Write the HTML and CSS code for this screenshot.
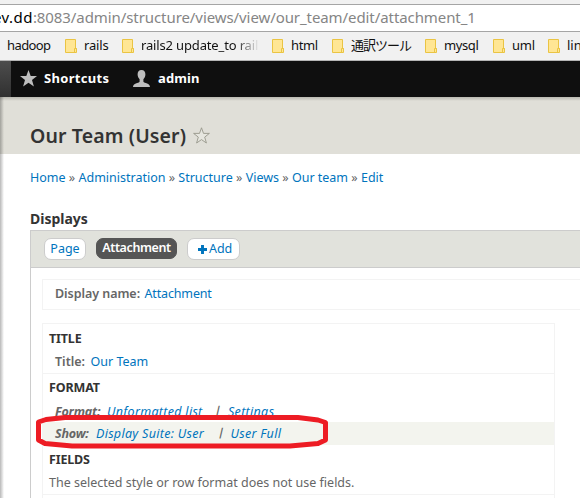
FILE: index.html
```html
<!DOCTYPE html>
<html lang="en">
<head>
<meta charset="utf-8">
<title>Our Team (User)</title>
<link rel="stylesheet" href="styles.css">
</head>
<body>
<svg class="defs" width="0" height="0"><symbol id="folder" viewBox="0 0 13 14"><path d="M.5.5h10v9h1v4H.5z" fill="#ffe694" stroke="#eac443"/><path d="M9.5 13V9.5h2V13" fill="#ffe694" stroke="#eac443"/></symbol></svg>
<div class="address"><span class="url"><b>ev.dd</b>:8083/admin/structure/views/view/our_team/edit/attachment_1</span></div>
<nav class="bookmarks">
<span class="bm hadoop">hadoop</span>
<span class="bm rails"><svg><use href="#folder"/></svg>rails</span>
<span class="bm rails2"><svg><use href="#folder"/></svg><span class="fade">rails2 update_to rail</span></span>
<span class="bm html"><svg><use href="#folder"/></svg>html</span>
<span class="bm jp"><svg><use href="#folder"/></svg>通訳ツール</span>
<span class="bm mysql"><svg><use href="#folder"/></svg>mysql</span>
<span class="bm uml"><svg><use href="#folder"/></svg>uml</span>
<span class="bm lin"><svg><use href="#folder"/></svg>lin</span>
</nav>
<div class="toolbar">
<svg class="star" viewBox="0 0 17 17"><path d="M8.5 0l2.200 6H17l-5 4.100 1.900 6.500-5.400-3.800-5.400 3.800L5 10.100 0 6h6.300z" fill="#bebebe"/></svg><span class="shortcuts">Shortcuts</span>
<svg class="person" viewBox="0 0 17 17"><path d="M8.5 0C5.9 0 4.5 1.8 4.6 4.500c.1 2 .9 3.700 2 4.800v2.500C5.600 13.400 0 13.300 0 17h17c0-3.700-5.600-3.600-6.600-5.200V9.300c1.100-1.100 1.900-2.800 2-4.800C12.500 1.800 11.100 0 8.500 0z" fill="#bebebe"/></svg><span class="admin">admin</span>
</div>
<main class="page">
<header><h1>Our Team (User)</h1><svg viewBox="0 0 17 17"><path d="M8.500 .8l2 5.600h5.900l-4.700 3.700 1.700 5.900-4.900-3.400-4.900 3.400 1.700-5.900L.6 6.400h5.900z" fill="#e6e6df" stroke="#96968a" stroke-width=".9"/></svg></header>
<div class="crumbs"><a>Home</a> » <a>Administration</a> » <a>Structure</a> » <a>Views</a> » <a>Our team</a> » <a>Edit</a></div>
<h2>Displays</h2>
<section class="displays">
<div class="tabs"><a class="tab t-page">Page</a><a class="tab active">Attachment</a><a class="tab t-add"><svg viewBox="0 0 8 8"><path d="M2.700 0h2.600v2.700H8v2.600H5.300V8H2.700V5.300H0V2.700h2.700z" fill="#0074bd"/></svg><span>Add</span></a></div>
<div class="name"><b>Display name:</b><a>Attachment</a></div>
<div class="column">
<section class="bucket b-title"><h3>TITLE</h3><div class="row"><b>Title:</b><a>Our Team</a></div></section>
<section class="bucket b-format"><h3>FORMAT</h3><div class="row it r-format"><b>Format:</b><a class="v">Unformatted list</a><i>|</i><a>Settings</a></div><div class="row it r-show"><b>Show:</b><a class="v">Display Suite: User</a><i>|</i><a class="full">User Full</a></div></section>
<section class="bucket b-fields"><h3>FIELDS</h3><p>The selected style or row format does not use fields.</p></section>
</div>
</section>
</main>
<svg class="mark" viewBox="0 0 580 498"><path d="M65 417.500L298 417.500L318 420L325.500 422.500V440L318 443.500L290 446H72L45 443.500L38.500 440V422L46 419.500Z" fill="none" stroke="#ed1c24" stroke-width="5" stroke-linejoin="round"/></svg>
</body>
</html>
```
FILE: styles.css
```css
* { box-sizing: border-box; }
html, body { margin: 0; height: 498px; overflow: hidden; }
body { position: relative; background: #fff; color: #666; font: 12.500px/20px "Noto Sans", "Noto Sans CJK JP", sans-serif; }
.defs { position: absolute; }
a { color: #0074bd; }
.address { height: 28px; margin-top: 4px; border: solid #a5a5a5; border-width: 1px 0; background: #fff; font-size: 15px; line-height: 24px; letter-spacing: -.08px; white-space: nowrap; color: #858585; box-shadow: 0 -4px #f1f1f1; }
.url { display: inline-block; margin-left: -7px; }
.url b { font-weight: 400; color: #000; letter-spacing: .45px; }
.bookmarks { display: flex; height: 29px; background: #f1f1f1; border-bottom: 1px solid #b5b5b5; font-size: 13px; line-height: 27px; color: #111; white-space: nowrap; }
.bm { display: flex; flex: none; }
.bm svg { width: 13px; height: 14px; margin: 7px 6px 0 0; }
.hadoop { width: 58px; margin-left: 7px; letter-spacing: -.6px; }
.rails { width: 57px; letter-spacing: -.15px; }
.rails2 { width: 150px; letter-spacing: -.15px; }
.fade { background: linear-gradient(90deg, #111 94px, #ddd 116px); -webkit-background-clip: text; color: transparent; }
.html { width: 60px; letter-spacing: -.4px; }
.jp { width: 93px; letter-spacing: -1px; }
.mysql { width: 68px; letter-spacing: -.4px; }
.uml { width: 55px; letter-spacing: -.2px; }
.toolbar { display: flex; height: 36px; background: linear-gradient(90deg, transparent 11px, #0f0f0f 11px), linear-gradient(#4d4d4d, #303030); color: #fff; font: bold 13px/34px "Noto Sans", sans-serif; letter-spacing: .3px; }
.toolbar svg { width: 17px; height: 17px; margin-top: 9px; }
.star { margin-left: 19.500px; }
.shortcuts { width: 89px; margin-left: 7.500px; }
.admin { margin-left: 8px; letter-spacing: .1px; }
.page { height: 401px; position: relative; }
.page::after { content: ""; position: absolute; left: 0; top: 0; width: 4px; height: 401px; background: linear-gradient(90deg, rgba(0,0,0,.28), transparent); }
header { display: flex; height: 57px; padding: 23px 0 0 30px; background: linear-gradient(#b9b8b0, #e0dfd8 4px); }
h1 { width: 163px; margin: 0; font-size: 19.500px; line-height: 31px; font-weight: 600; letter-spacing: .12px; color: #333; white-space: nowrap; }
header svg { width: 17px; height: 17px; margin-top: 7px; }
.crumbs { height: 51px; padding: 14px 0 0 30px; white-space: nowrap; }
h2 { margin: 0; padding-left: 30px; height: 25px; font-size: 14px; line-height: 27px; color: #333; }
.displays { margin-left: 30px; height: 270px; border: solid #ccc; border-width: 1px 0 0 1px; }
.tabs { display: flex; height: 37px; padding: 7px 0 0 13px; background: #e1e2dc; border-bottom: 1px solid #ccc; }
.tab { height: 22px; border: 1px solid #ccc; border-radius: 7px; background: #fff; text-align: center; line-height: 20px; }
.t-page { width: 42px; }
.active { width: 81px; height: 21px; margin: 0 10px; background: #555; border-color: #555; color: #fff; font-weight: 600; letter-spacing: -.4px; line-height: 18px; }
.t-add { display: flex; align-items: center; width: 53px; padding-left: 10px; letter-spacing: -.1px; }
.t-add svg { width: 9px; height: 9px; margin-right: 2px; }
.name { display: flex; height: 31px; margin: 11px 0 13px 11px; padding: 4px 0 0 12px; border: 1px solid #f3f3f3; border-right: 0; }
.name b { width: 89.500px; font-weight: 600; letter-spacing: -.05px; }
.name a { letter-spacing: -.15px; }
.column { width: 513px; height: 180px; margin-left: 11px; border: 1px solid #f3f3f3; }
.bucket { border-bottom: 1px solid #f3f3f3; white-space: nowrap; }
h3 { height: 27px; margin: 0; padding-left: 6px; font-size: 12.500px; line-height: 30px; font-weight: 700; letter-spacing: -.15px; color: #333; }
.row { display: flex; height: 22px; padding-left: 12px; line-height: 22px; }
.row b { width: 35.500px; font-weight: 600; }
.b-title { height: 50px; }
.b-format { height: 71px; border: 0; }
.b-format h3 { height: 26px; line-height: 28px; }
.it { font-style: italic; letter-spacing: .3px; }
.it b { font-weight: 700; letter-spacing: -.2px; }
.r-format { line-height: 23px; }
.r-format b { width: 52px; }
.r-format .v { width: 108px; }
.it i { width: 13px; font-size: 11px; line-height: 20px; font-weight: 700; font-style: normal; transform: skewX(-13deg); }
.r-show { height: 23px; line-height: 23px; background: #f3f4ee; }
.r-show b { width: 41px; }
.r-show .v { width: 121.500px; }
.b-fields { height: 50px; }
.b-fields h3 { line-height: 29px; }
p { margin: 0; padding-left: 6px; line-height: 21px; }
.mark { position: absolute; left: 0; top: 0; width: 580px; height: 498px; pointer-events: none; }
```
